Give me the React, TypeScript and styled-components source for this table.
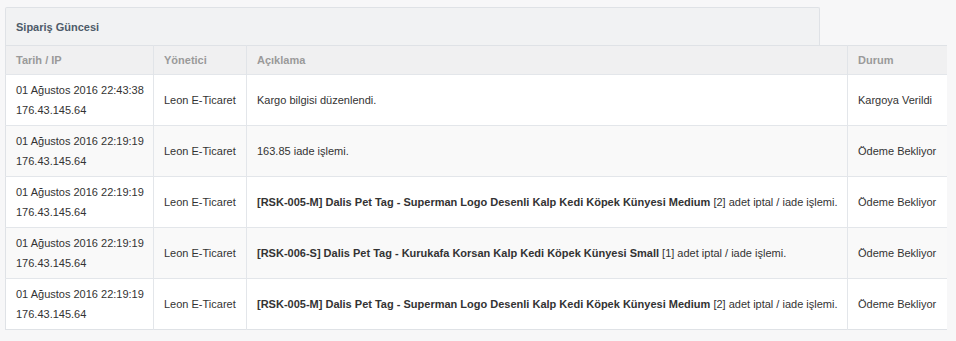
import React from "react";
import styled, { createGlobalStyle } from "styled-components";

const Global = createGlobalStyle`
  html, body { margin: 0; padding: 0; background: #f7f7f8; }
  body { font-family: "Liberation Sans", Arial, sans-serif; font-size: 11px; color: #333; }
`;

const Page = styled.div`
  padding: 7px 0 0 5px;
  width: 956px;
  height: 341px;
  box-sizing: border-box;
  overflow: hidden;
`;

const PanelHeading = styled.div`
  width: 815px;
  height: 38px;
  box-sizing: border-box;
  background: #f1f2f3;
  border: 1px solid #dfe2e6;
  border-bottom: none;
  border-radius: 2px 2px 0 0;
  display: flex;
  align-items: center;
  padding: 0 0 0 10px;
  font-weight: bold;
  font-size: 11px;
  color: #4e5b69;
`;

const Table = styled.table`
  width: 941px;
  border-collapse: collapse;
  table-layout: fixed;
  border-left: 1px solid #dfe2e6;
  border-bottom: 1px solid #dfe2e6;
`;

const Col = styled.col<{ $w: number }>`
  width: ${(p) => p.$w}px;
`;

const Th = styled.th`
  text-align: left;
  font-weight: bold;
  color: #9a9a9a;
  background: #f0f0f1;
  padding: 7px 10px;
  line-height: 14px;
  border-top: 1px solid #dfe2e6;
  border-right: 1px solid #e1e4e8;
  &:last-child { border-right: none; }
`;

const Tr = styled.tr<{ $alt: boolean }>`
  background: ${(p) => (p.$alt ? "#f9f9f9" : "#ffffff")};
`;

const Td = styled.td`
  padding: 5px 10px;
  line-height: 20px;
  vertical-align: middle;
  border-top: 1px solid #e3e6ea;
  border-right: 1px solid #e3e6ea;
  white-space: nowrap;
  overflow: visible;
  &:last-child { border-right: none; }
`;

const Line = styled.div`
  white-space: nowrap;
`;

type Row = { date: string; ip: string; user: string; code?: string; desc: string; status: string };

const rows: Row[] = [
  { date: "01 Ağustos 2016 22:43:38", ip: "176.43.145.64", user: "Leon E-Ticaret", desc: "Kargo bilgisi düzenlendi.", status: "Kargoya Verildi" },
  { date: "01 Ağustos 2016 22:19:19", ip: "176.43.145.64", user: "Leon E-Ticaret", desc: "163.85 iade işlemi.", status: "Ödeme Bekliyor" },
  { date: "01 Ağustos 2016 22:19:19", ip: "176.43.145.64", user: "Leon E-Ticaret", code: "[RSK-005-M] Dalis Pet Tag - Superman Logo Desenli Kalp Kedi Köpek Künyesi Medium", desc: " [2] adet iptal / iade işlemi.", status: "Ödeme Bekliyor" },
  { date: "01 Ağustos 2016 22:19:19", ip: "176.43.145.64", user: "Leon E-Ticaret", code: "[RSK-006-S] Dalis Pet Tag - Kurukafa Korsan Kalp Kedi Köpek Künyesi Small", desc: " [1] adet iptal / iade işlemi.", status: "Ödeme Bekliyor" },
  { date: "01 Ağustos 2016 22:19:19", ip: "176.43.145.64", user: "Leon E-Ticaret", code: "[RSK-005-M] Dalis Pet Tag - Superman Logo Desenli Kalp Kedi Köpek Künyesi Medium", desc: " [2] adet iptal / iade işlemi.", status: "Ödeme Bekliyor" },
];

export default function App() {
  return (
    <Page>
      <Global />
      <PanelHeading>Sipariş Güncesi</PanelHeading>
      <Table>
        <colgroup>
          <Col $w={148} />
          <Col $w={93} />
          <Col $w={601} />
          <Col $w={99} />
        </colgroup>
        <thead>
          <tr>
            <Th>Tarih / IP</Th>
            <Th>Yönetici</Th>
            <Th>Açıklama</Th>
            <Th>Durum</Th>
          </tr>
        </thead>
        <tbody>
          {rows.map((r, i) => (
            <Tr key={i} $alt={i % 2 === 1}>
              <Td>
                <Line>{r.date}</Line>
                <Line>{r.ip}</Line>
              </Td>
              <Td>{r.user}</Td>
              <Td>
                {r.code && <b>{r.code}</b>}
                {r.desc}
              </Td>
              <Td>{r.status}</Td>
            </Tr>
          ))}
        </tbody>
      </Table>
    </Page>
  );
}
